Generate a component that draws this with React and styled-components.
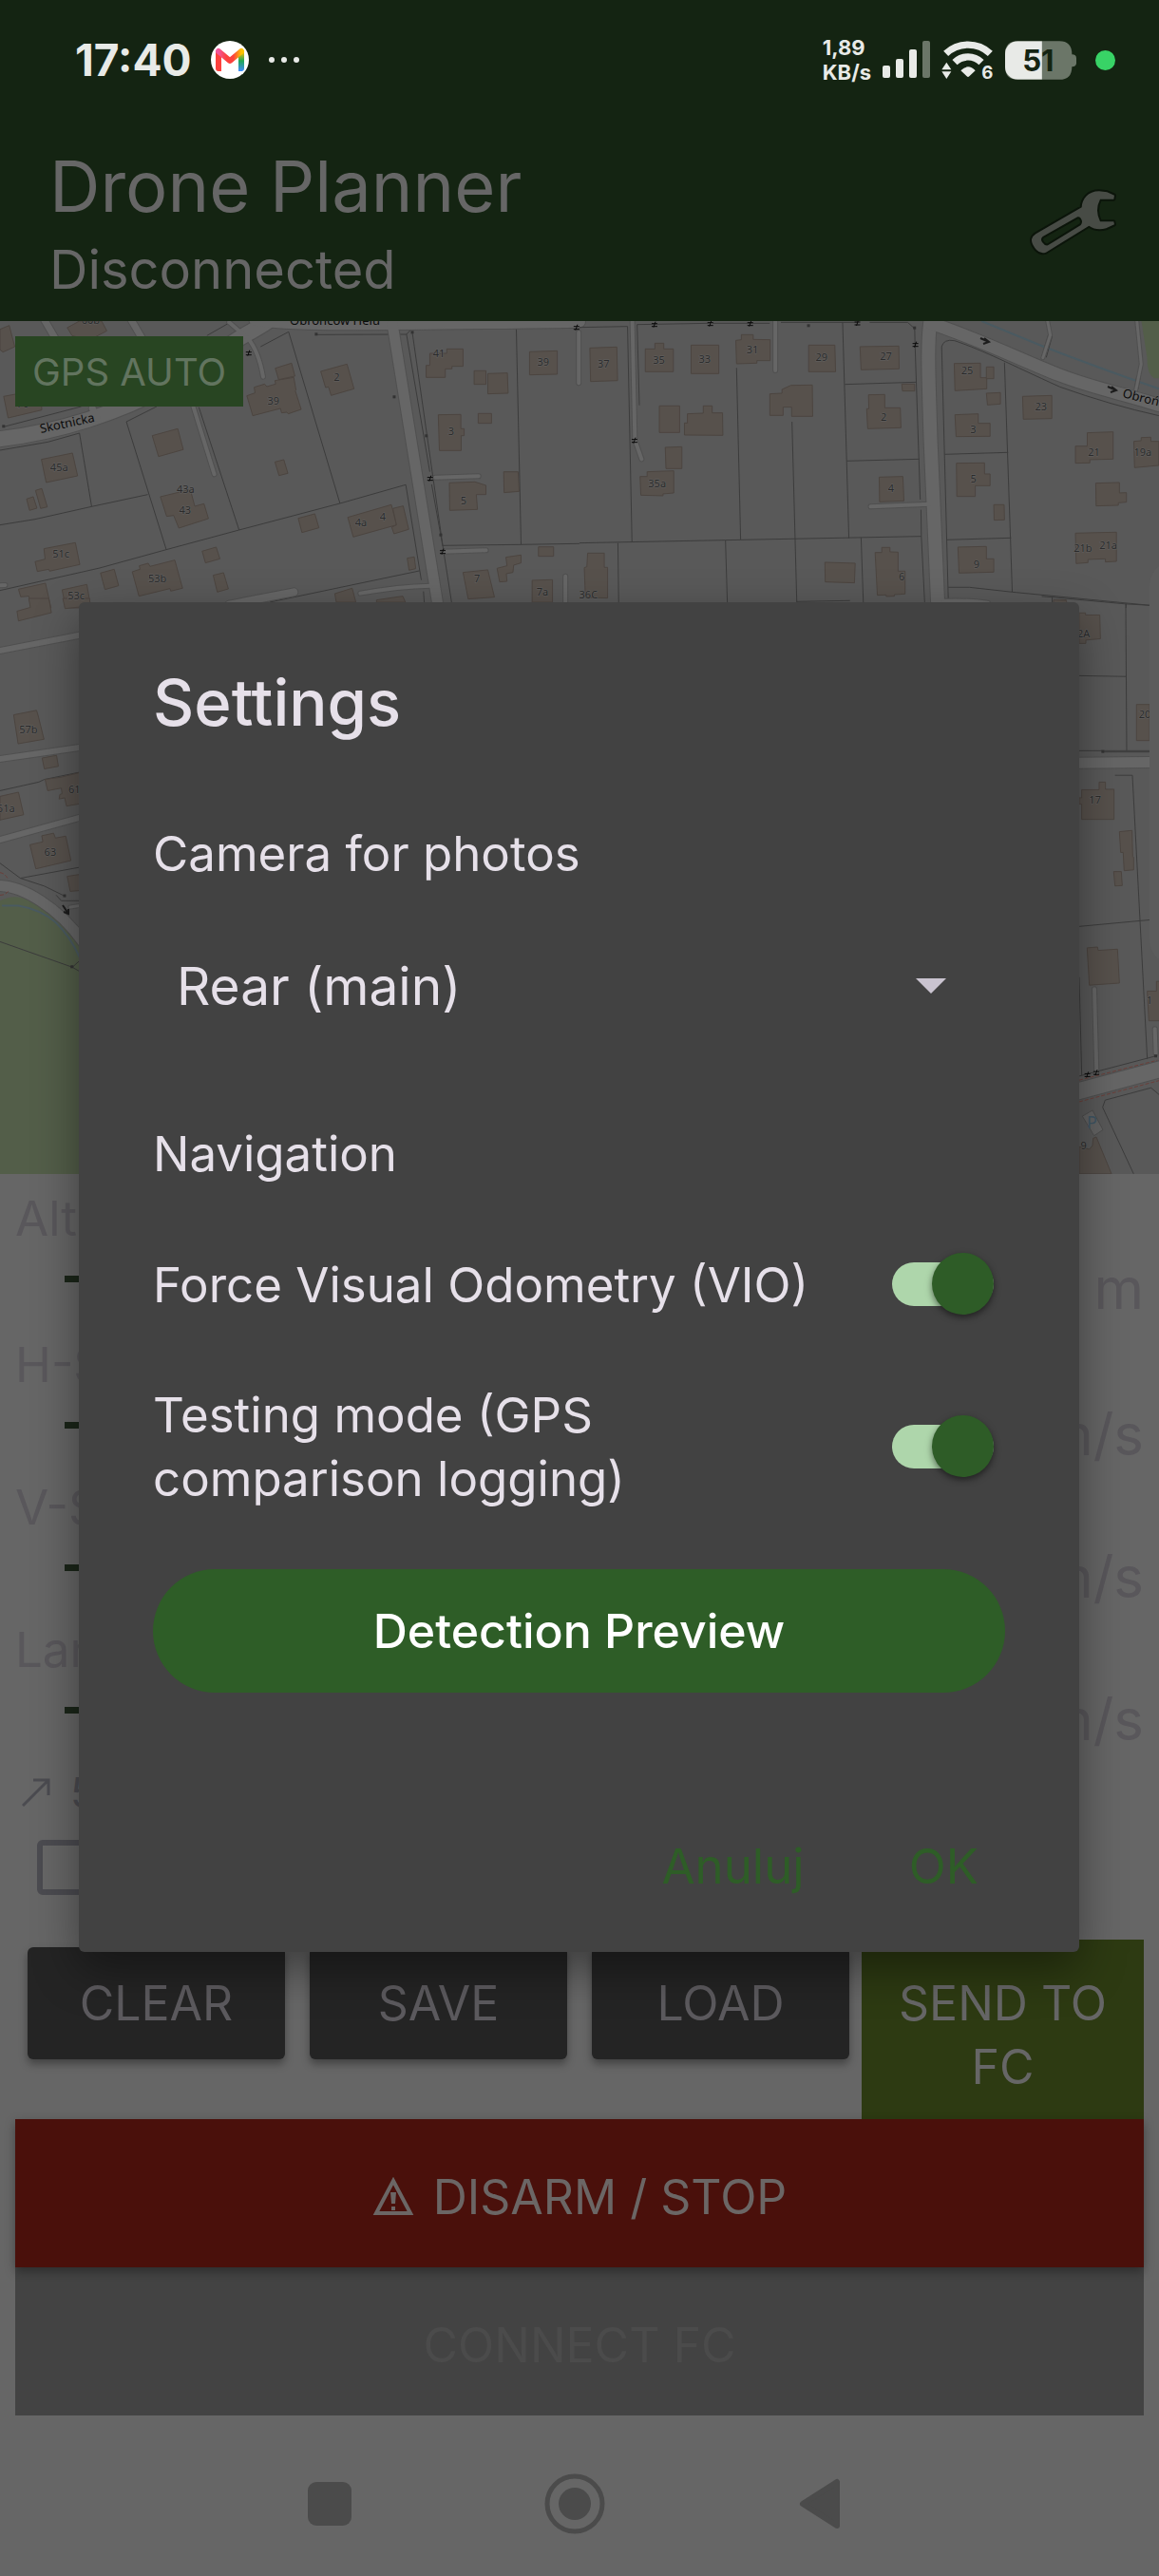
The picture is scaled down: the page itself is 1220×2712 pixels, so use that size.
import React, { useState } from 'react';
import styled, { createGlobalStyle } from 'styled-components';

const GlobalStyle = createGlobalStyle`
  * {
    box-sizing: border-box;
  }
  body {
    margin: 0;
    background: #666666;
    font-family: Inter, "Liberation Sans", sans-serif;
  }
  button,
  select,
  input {
    margin: 0;
    padding: 0;
    border: 0;
    font-family: inherit;
  }
`;

/* ---------- map ---------- */

// every sheet keeps its own grid, placed on the map by x, y and scale
const sheets = [
  {
    x: 0, y: -8, sx: 0.389, sy: 0.3333,
    roads: [
      { w: 16, d: 'M-10 398 C160 375 330 310 450 230 S600 110 660 70 S720 30 740 10' },
      { w: 12, d: 'M690 20 C760 36 900 38 1568 26' },
      { w: 11, d: 'M1062 34 L1186 930' },
      { w: 7, d: 'M120 20 L155 90 M355 20 L400 110 M250 300 L262 330' },
      { w: 4, d: 'M522 290 L580 508 M620 28 L672 80 Q700 120 712 200 M1178 518 L1295 514 M1200 752 L1315 748 M975 884 Q1080 862 1165 860 M1530 830 V930 M1566 60 V220 M-10 860 L14 858' },
      { w: 8, d: 'M620 920 L795 880' },
    ],
    lines: [
      'M0 432 L130 406 L215 378 L248 610 M0 668 L95 650 L248 610 L400 572 M0 875 L270 804 L450 746 L647 684 L920 600 L1098 541 L1140 842',
      'M424 294 L342 342 L450 746 M538 296 L647 684 M705 105 L781 58 L920 600 M857 67 L1100 66 L1163 500 M1100 66 L1116 46 H1550 M1116 62 L1198 733 L1222 912 M1198 733 L1410 730 L1568 727 M1397 44 L1410 730',
      'M10 358 L220 294 M730 912 L1135 813 M560 70 L620 30 M1146 878 L1148 912 M1168 540 L1198 735',
    ],
    houses: [
      'M112 461L196 441L210 513L125 534Z', 'M412 386L481 364L496 430L429 452Z', 'M434 579L515 556L527 609L552 601L564 648L484 678L470 638L451 641Z',
      'M668 260L690 251L688 233L716 223L722 231L746 223L744 212L795 202L801 242L799 244L815 303L780 317L776 312L762 314L759 300L684 323Z',
      'M745 173L789 157L798 198L754 209Z', 'M868 183L939 160L958 238L896 259L889 232L881 234Z', 'M744 469L768 462L779 505L755 512Z',
      'M1163 126H1209V112H1253V167H1223V175H1205V202H1153V164H1163Z', 'M1283 181H1315V224H1283Z', 'M1320 190L1373 188L1375 252L1320 254Z', 'M1433 121L1508 118V192L1433 194Z',
      'M1186 320L1247 319V364H1256V386H1248V433H1189Z', 'M1294 316H1330V347H1294Z', 'M1216 535L1285 532L1315 543V572H1289L1292 619L1217 622Z', 'M1363 500H1402L1405 562L1364 566Z',
      'M807 647L852 633L863 677L817 692Z', 'M941 644L1059 604L1073 668L956 706Z', 'M1063 616L1091 608L1106 682L1066 696L1060 675L1073 668Z', 'M1102 773L1121 769L1125 806L1107 811Z',
      'M119 743L204 724L216 793L134 814L132 808L101 815L95 784L122 776Z', 'M72 586L90 579L100 615L80 622Z', 'M96 559L113 553L128 611L110 616Z', 'M272 820L309 808L321 860L284 872Z',
      'M358 816L379 808L377 797L401 789L406 799L473 779L494 868L462 877L460 869L376 893Z', 'M547 751L585 738L595 775L556 788Z', 'M577 827L605 819L618 870L588 880Z',
      'M50 871L123 852L138 930H84L78 893L56 895Z', 'M168 873L235 856L246 930H178Z', 'M182 45L215 24H275L289 55L240 85L195 70Z', 'M0 50L25 38L40 105L8 122L0 115Z', 'M10 262L110 240L113 305L22 330Z',
      'M1253 818L1320 810L1338 896L1267 902Z', 'M1345 805L1372 797L1369 770L1410 763V788L1390 795L1388 818L1370 822L1372 846L1352 848Z', 'M1440 843L1495 841V912H1440Z', 'M1457 737H1498V767H1457Z',
      'M906 885L953 868L963 912H910Z', 'M1019 905L1090 893L1097 912H1019Z',
    ],
    labels: [[160, 497, '45a'], [502, 568, '43a'], [501, 632, '43'], [740, 288, '39'], [911, 214, '2'], [1188, 139, '41'], [1470, 165, '39'], [1221, 384, '3'], [1254, 604, '5'], [977, 673, '4a'], [1036, 655, '4'], [165, 772, '51c'], [426, 850, '53b'], [206, 903, '53c'], [1291, 850, '7'], [1468, 890, '7a'], [245, 32, '60b'], [62, 298, '70']],
    gates: [[673, 125], [1164, 521], [1198, 752], [1560, 44]],
    posts: [[857, 67], [1117, 61], [1068, 265], [1155, 388], [1194, 701], [11, 358]],
  },
  {
    x: 610, y: -8, sx: 0.389, sy: 0.3333,
    green: ['M1520 20 H1580 V205 H1555 Q1535 190 1536 140 Z'],
    water: ['M1088 24 L1250 102 Q1400 170 1568 238'],
    roads: [
      { w: 14, d: 'M950 20 C940 100 945 200 950 400 L970 930' },
      { w: 13, d: 'M950 30 C1100 90 1200 150 1300 195 S1480 255 1568 290' },
      { w: 4, d: 'M143 24 L150 400 L168 460 M530 24 V180 M788 610 L950 602 M985 908 Q1050 905 1105 914' },
      { w: 3, d: 'M1266 20 L1274 68 L1254 140 M1508 20 L1520 160 L1506 240' },
    ],
    lines: [
      'M0 44 L130 41 L142 721 M162 290 L156 35 L350 31 M360 31 H515 M545 28 L712 28 L729 710 M712 28 H752 M785 28 H888 L907 48 L908 100 L922 588 M425 172 L436 714 M575 342 L588 912',
      'M0 725 L395 716 L925 704 M718 224 L912 217 M723 466 L920 460 M104 725 L106 912 M395 716 L400 912 M762 708 L768 912 M924 620 L925 704 L934 912',
      'M998 905 L980 105 Q985 80 1015 86 C1100 120 1160 158 1300 232 Q1440 290 1568 323 M1150 155 L1171 880 M988 445 L1160 439 M994 715 L1168 709 M998 865 H1055 L1171 880 L1543 922 M1279 895 V912 M1479 916 V930 M588 910 L732 907',
      'M1268 70 L1251 136 M1279 72 L1263 139 M1508 200 L1502 238 M1517 202 L1511 240',
    ],
    houses: [
      'M28 109L101 106L103 212L30 215Z', 'M178 112H204V94H228V112H254V184H178Z', 'M302 100H377V190H302Z', 'M423 85L438 83V67H470V82L516 83V149H480V157L425 159Z', 'M620 100H691L693 184H620Z', 'M759 105L864 103L865 175L762 178Z',
      'M216 292H271V376H216Z', 'M292 317L335 315V292H359V314H387L388 385L284 384V346H292Z', 'M232 423L277 421V490H234Z', 'M183 500L255 497V567L226 570V576L166 574L164 515H183Z',
      'M515 254L548 252V240L572 227L630 226L631 325H574V296H551V322H515Z', 'M872 223H907V245H874Z', 'M782 257L826 256V298H868L870 361L780 364L777 301H783Z', 'M811 517L875 515L878 592L812 595Z',
      'M1014 158L1085 157V203H1102V238L1016 244Z', 'M1101 169H1121V206H1101Z', 'M1101 252L1139 250V286L1104 289Z', 'M1016 320L1079 317V347H1111V388L1019 389Z', 'M1020 473L1096 472V507H1111V544H1071V578H1021Z', 'M1121 604H1149L1150 652L1122 653Z',
      'M1199 262L1278 259V332L1201 334Z', 'M1374 377L1444 374V460L1381 462V472L1342 473V419H1374Z', 'M1500 404L1520 402V392L1546 391V404H1568V480L1502 487Z', 'M1397 536L1461 534V567L1480 566V596L1458 598V606L1398 608Z',
      'M1342 694L1453 691V783L1423 785V775L1376 777V787L1344 790Z', 'M1024 738L1101 736V775H1121V817L1027 820Z', 'M800 755H818V739H840V753L862 754V814H881V886L852 888V893L830 894V889L806 890Z', 'M664 786L746 789L744 851L665 848Z',
      'M22 757H67V802H76V899L16 897L13 803L20 800Z', 'M1284 905H1317V914H1284Z',
    ],
    labels: [[65, 170, '37'], [215, 158, '35'], [339, 156, '33'], [468, 127, '31'], [655, 151, '29'], [829, 148, '27'], [210, 550, '35a'], [823, 340, '2'], [843, 564, '4'], [1049, 191, '25'], [1065, 378, '3'], [1066, 535, '5'], [1249, 306, '23'], [1392, 450, '21'], [1524, 451, '19a'], [1362, 752, '21b'], [1431, 745, '21a'], [1074, 805, '9'], [872, 844, '6'], [24, 899, '36C']],
    gates: [[203, 35], [354, 32], [462, 32], [752, 30], [909, 98], [149, 401]],
    posts: [[621, 40], [908, 47]],
  },
  {
    x: 0, y: 292, sx: 0.389, sy: 0.3954,
    green: ['M0 805 Q50 782 90 812 Q160 840 215 915 V1533 H-10 V805 Z'],
    water: ['M5 818 H50 Q110 828 150 862 Q190 900 215 955'],
    roads: [
      { w: 6, d: 'M-5 140 L215 98 M-5 428 L215 397 M-5 644 L215 584' },
      { w: 11, d: 'M-10 765 C60 762 160 825 225 915' },
      { w: 3, d: 'M190 822 L215 818' },
    ],
    lines: ['M0 512 L105 489 L120 482 L215 463 M0 705 L55 745 L120 766 L176 793 M55 745 L215 716 M152 790 L166 805 H215 M0 914 L196 982 L215 965 M196 982 L215 993'],
    dashes: ['M0 730 Q14 732 22 748 M0 790 Q14 790 22 780'],
    houses: ['M46 34L82 24L78 0H132L139 38L50 60Z', 'M170 0H243V20L176 27Z', 'M37 310L99 298L103 311L119 375L49 387Z', 'M114 425L153 418L158 447L120 454Z', 'M122 482L165 476L215 464V547L180 553L175 531L160 534L162 522L168 520L166 505L129 512Z', 'M0 527L50 516L64 576L0 590Z', 'M81 656L116 648L113 632L145 625L150 638L178 633L192 698L97 720Z', 'M182 740L215 735V778L190 780Z'],
    labels: [[77, 358, '57b'], [201, 518, '61'], [16, 568, '61a'], [136, 686, '63']],
    posts: [[176, 793], [196, 982]],
  },
  {
    x: 1100, y: 222, sx: 0.3333, sy: 0.4464,
    roads: [
      { w: 11, d: 'M100 545 L330 543' },
      { w: 4, d: 'M156 1078 L163 1275 M347 1172 L350 1230' },
      { w: 17, d: 'M100 1320 L365 1267' },
    ],
    lines: ['M-10 152 L22 154 L255 170 L330 173 M255 170 L258 516 M100 339 L255 341 M100 516 H330 M184 519 H330 M221 574 H276 L323 1243 M100 931 L330 915 M108 1050 L116 1282 M100 1285 L350 1236', 'M280 1514 L182 1357 L190 1340 L335 1311 L365 1330'],
    dashes: ['M108 1293 L355 1246 M108 1344 L360 1294'],
    houses: ['M108 191H128V196H173L175 252L129 255V263H108Z', 'M289 407H330V492H289Z', 'M108 627H116V608H171V590H191V607H218V678H116V642H108Z', 'M235 707L275 704L277 765L280 768V797L250 799L247 756H239Z', 'M217 801H241L244 834L221 835Z', 'M133 981L166 979L168 987L229 984L235 1064L140 1069Z', 'M323 1083H352V1060H365V1153H328Z', 'M108 1450L140 1456L150 1447L152 1430L162 1427L210 1514H108Z', 'M27 160L68 162V167H27Z'],
    parking: 'M118 1378L150 1364L183 1410L155 1424Z',
    labels: [[122, 248, '2A'], [315, 440, '20'], [158, 640, '17'], [122, 1456, '9'], [330, 1113, '1']],
    gates: [[134, 1280], [162, 1275]],
    posts: [[184, 519], [351, 1237]],
  },
];

const MapSvg = styled.svg`
  display: block;
  width: 100%;
  height: auto;
  background: #595959;
  font-family: "Noto Sans", sans-serif;

  path {
    vector-effect: non-scaling-stroke;
  }
  .house { fill: #57514c; stroke: #4c4540; stroke-width: 1; }
  .casing { fill: none; stroke: #505050; stroke-linecap: round; stroke-linejoin: round; }
  .road { fill: none; stroke: #666666; stroke-linecap: round; stroke-linejoin: round; }
  .line { fill: none; stroke: #3c3c3c; stroke-width: 1; }
  .water { fill: none; stroke: #4a5a61; stroke-width: 2; }
  .green { fill: #535e49; }
  .dash { fill: none; stroke: #6a3f3a; stroke-width: 1; stroke-dasharray: 4 2; }
  .number { font-size: 11px; fill: #2b2b2b; text-anchor: middle; stroke: #626262; stroke-width: 1; paint-order: stroke; }
  .street { font-size: 13px; fill: #0b0b0b; stroke: #666666; stroke-width: 1; paint-order: stroke; }
`;

const MapView = () => (
  <MapSvg viewBox="0 0 1220 898" role="img" aria-label="Street map">
    {sheets.map((s, i) => (
      <g key={i} transform={`translate(${s.x} ${s.y}) scale(${s.sx} ${s.sy})`}>
        {s.green?.map((d) => <path key={d} className="green" d={d} />)}
        {s.water?.map((d) => <path key={d} className="water" d={d} />)}
        {s.lines.map((d) => <path key={d} className="line" d={d} />)}
        {s.roads.map((r) => <path key={r.d} className="casing" strokeWidth={r.w + 2} d={r.d} />)}
        {s.roads.map((r) => <path key={r.d} className="road" strokeWidth={r.w} d={r.d} />)}
        {s.dashes?.map((d) => <path key={d} className="dash" d={d} />)}
        {s.houses.map((d) => <path key={d} className="house" d={d} />)}
        {s.parking && <path d={s.parking} fill="#636363" stroke="#4d4d4d" />}
      </g>
    ))}
    {sheets.map((s, i) => (
      <g key={i}>
        {s.posts?.map(([x, y]) => (
          <rect key={`${x}-${y}`} x={s.x + x * s.sx - 2} y={s.y + y * s.sy - 2} width="3" height="3" fill="#333333" />
        ))}
        {s.gates?.map(([x, y]) => (
          <path
            key={`${x}-${y}`}
            transform={`translate(${s.x + x * s.sx} ${s.y + y * s.sy})`}
            d="M-3 -1H3M-3 2H3M-1 3L1 -3"
            stroke="#0a0a0a"
          />
        ))}
        {s.labels.map(([x, y, text]) => (
          <text key={`${x}-${y}`} className="number" x={s.x + x * s.sx} y={s.y + y * s.sy}>{text}</text>
        ))}
      </g>
    ))}
    <path d="M1032 18l9 4m-5 -4l5 4l-6 2M1166 69l9 4m-5 -4l5 4l-6 2M66 615l6 9m0 -5v5l-5 -2" fill="none" stroke="#1c1c1c" strokeWidth="2" />
    <text className="street" transform="translate(43 118) rotate(-12)">Skotnicka</text>
    <text className="street" x="305" y="4">Obrońców Helu</text>
    <text className="street" transform="translate(1181 80) rotate(14)">Obrońców Helu</text>
    <text x="1144" y="850" fontSize="18" fill="#3f5563">P</text>
    <rect x="1210" y="255" width="40" height="420" rx="24" fill="#5c5c5c" />
  </MapSvg>
);

/* ---------- top ---------- */

const Screen = styled.div`
  position: relative;
  display: flex;
  flex-direction: column;
  min-height: 100vh;
  overflow: hidden;
`;

const StatusBar = styled.div`
  display: flex;
  align-items: center;
  justify-content: space-between;
  height: 126px;
  padding: 0 46px 0 79px;
  background: #142412;
  color: #e8eae7;
`;

const StatusGroup = styled.div`
  display: flex;
  align-items: center;
  gap: ${(p) => p.$gap}px;
`;

const Clock = styled.span`
  font-size: 46px;
  font-weight: 700;
  line-height: 60px;
`;

const Speed = styled.span`
  font-size: 22px;
  font-weight: 700;
  line-height: 26px;
`;

const RecordingDot = styled.span`
  width: 21px;
  height: 21px;
  margin-left: 8px;
  border-radius: 50%;
  background: #38d366;
`;

const Header = styled.header`
  display: flex;
  align-items: flex-start;
  justify-content: space-between;
  padding: 24px 43px 12px 52px;
  background: #142412;
  color: #666666;
`;

const AppTitle = styled.h1`
  margin: 0;
  font-size: 74px;
  font-weight: 400;
  line-height: 92px;
`;

const AppState = styled.p`
  margin: 0;
  font-size: 56px;
  font-weight: 400;
  line-height: 84px;
`;

const ToolButton = styled.button`
  display: flex;
  padding-top: 48px;
  background: none;
`;

const GmailIcon = () => (
  <svg width="40" height="40" viewBox="0 0 40 40">
    <defs>
      <linearGradient id="gmRight" x1="0" y1="0" x2="0" y2="1">
        <stop offset="0" stopColor="#fbbc04" />
        <stop offset="0.45" stopColor="#1fa855" />
        <stop offset="1" stopColor="#3f8cff" />
      </linearGradient>
      <linearGradient id="gmTop" x1="0" y1="0" x2="1" y2="0">
        <stop offset="0" stopColor="#f2559b" />
        <stop offset="0.35" stopColor="#fc413d" />
        <stop offset="0.65" stopColor="#fc413d" />
        <stop offset="1" stopColor="#fcc400" />
      </linearGradient>
    </defs>
    <circle cx="20" cy="20" r="20" fill="#ffffff" />
    <path d="M5 12h6v20H8q-3 0-3-3z" fill="#fc413d" />
    <path d="M29 12h6v17q0 3-3 3h-3z" fill="url(#gmRight)" />
    <path d="M8 11L20 21L32 11" fill="none" stroke="url(#gmTop)" strokeWidth="6" strokeLinecap="round" strokeLinejoin="round" />
  </svg>
);

const DotsIcon = () => (
  <svg width="34" height="8" viewBox="0 0 34 8" fill="#e8eae7">
    <circle cx="4" cy="4" r="3" />
    <circle cx="17" cy="4" r="3" />
    <circle cx="30" cy="4" r="3" />
  </svg>
);

const SignalIcon = () => (
  <svg width="50" height="40" viewBox="0 0 50 40" fill="#e8eae7">
    <rect x="0" y="26" width="8" height="13" rx="2" />
    <rect x="14" y="19" width="8" height="20" rx="2" />
    <rect x="28" y="9" width="8" height="30" rx="2" />
    <rect x="42" y="0" width="8" height="39" rx="2" fill="#6b7668" />
  </svg>
);

const WifiIcon = () => (
  <svg width="55" height="42" viewBox="395 37 165 126" fill="#e8eae7">
    <path d="M409 80A102 102 0 0 1 549 80M437 108A60 60 0 0 1 521 108" fill="none" stroke="#e8eae7" strokeWidth="22" />
    <path d="M456 134Q479 110 502 134L483 152Q479 156 475 152Z" />
    <path d="M396 131L411 108L426 131ZM396 137H426L411 160Z" />
    <text x="522" y="160" fontSize="56" fontWeight="700">6</text>
  </svg>
);

const BatteryIcon = () => (
  <svg width="75" height="41" viewBox="600 36 226 122">
    <defs>
      <clipPath id="charge"><rect x="600" y="36" width="117" height="122" /></clipPath>
    </defs>
    <path d="M640 36H772Q812 36 812 78Q826 78 826 90V106Q826 117 812 117Q812 158 772 158H640Q600 158 600 118V76Q600 36 640 36Z" fill="#6b7668" />
    <rect x="600" y="36" width="212" height="122" rx="40" fill="#e8eae7" clipPath="url(#charge)" />
    <text x="705" y="132" fontSize="94" fontWeight="700" textAnchor="middle" fill="#142412">51</text>
  </svg>
);

const WrenchIcon = () => (
  <svg width="95" height="72" viewBox="665 505 285 216">
    <path
      d="M835 566C836 540 855 515 890 515L915 518L938 528L936 540H893Q875 575 893 611H936L938 620L912 632Q880 640 858 624L722 708Q705 714 692 700Q676 682 677 667Q680 656 690 650ZM822 596L712 658Q703 665 710 676Q718 688 728 686L832 622Q838 615 835 606Q830 594 822 596Z"
      fill="#474b45"
      fillRule="evenodd"
      stroke="#0b140a"
      strokeWidth="12"
      strokeLinejoin="round"
      paintOrder="stroke"
    />
  </svg>
);

const MapArea = styled.section`
  position: relative;
`;

const GpsBadge = styled.button`
  position: absolute;
  top: 16px;
  left: 16px;
  height: 74px;
  padding: 0 18px;
  background: #284522;
  color: #62745f;
  font-size: 40px;
`;

/* ---------- flight controls ---------- */

const Controls = styled.section`
  padding: 14px 16px 0;
`;

const Field = styled.div`
  margin-bottom: ${(p) => (p.$first ? 4 : 0)}px;
  color: #59575b;
`;

const FieldLabel = styled.label`
  display: block;
  font-size: 51px;
  line-height: 66px;
`;

const FieldRow = styled.div`
  display: flex;
  align-items: flex-start;
  gap: 40px;
  height: 84px;
  padding-left: 52px;
`;

const Range = styled.input`
  flex: 1;
  height: 60px;
  appearance: none;
  background: transparent;

  &::-webkit-slider-runnable-track {
    height: 7px;
    background: #1b2619;
  }
  &::-webkit-slider-thumb {
    appearance: none;
    width: 36px;
    height: 36px;
    margin-top: -15px;
    border-radius: 50%;
    background: #1b2619;
  }
`;

const Unit = styled.span`
  font-size: 60px;
  line-height: 80px;
`;

const Distance = styled.div`
  display: flex;
  align-items: center;
  gap: 21px;
  height: 66px;
  padding-left: 7px;
  color: #4b4b50;
  font-size: 44px;
`;

const FollowRow = styled.label`
  display: flex;
  align-items: center;
  gap: 24px;
  height: 92px;
  margin-bottom: 30px;
  padding-left: 23px;
  color: #59575b;
  font-size: 44px;
`;

const Tick = styled.input`
  width: 58px;
  height: 58px;
  appearance: none;
  border: 6px solid #4b4b50;
  border-radius: 6px;
`;

const Mission = styled.div`
  display: grid;
  grid-template-columns: repeat(4, 1fr);
  align-items: start;
`;

const MissionButton = styled.button`
  height: 118px;
  margin: 8px 13px;
  border-radius: 6px;
  background: #242424;
  box-shadow: 0 5px 8px rgba(0, 0, 0, 0.35);
  color: #5c5a5e;
  font-size: 50px;
`;

const SendButton = styled.button`
  height: 189px;
  padding-top: 12px;
  background: #2d3a12;
  color: #666666;
  font-size: 50px;
  line-height: 67px;
`;

const WideButton = styled.button`
  position: relative;
  display: flex;
  align-items: center;
  justify-content: center;
  gap: 20px;
  width: 100%;
  height: 156px;
  padding-top: 8px;
  background: ${(p) => (p.$danger ? '#4a100b' : '#434343')};
  color: ${(p) => (p.$danger ? '#6b6665' : '#4b4b4b')};
  box-shadow: ${(p) => (p.$danger ? '0 4px 10px rgba(0, 0, 0, 0.35)' : 'none')};
  z-index: ${(p) => (p.$danger ? 1 : 0)};
  font-size: 50px;
`;

const NavBar = styled.nav`
  display: flex;
  flex: 1;
  align-items: center;
  justify-content: center;
  gap: 194px;
  min-height: 169px;
  padding: 16px 10px 0 0;
`;

const NavButton = styled.button`
  display: flex;
  align-items: center;
  justify-content: center;
  width: 64px;
  height: 64px;
  background: none;
`;

/* ---------- dialog ---------- */

const Overlay = styled.div`
  position: absolute;
  inset: 0;
  z-index: 2;
  display: flex;
  align-items: center;
  justify-content: center;
  padding: 0 84px 23px 83px;
`;

const Dialog = styled.form`
  width: 100%;
  padding: 60px 78px 35px;
  border-radius: 6px;
  background: #424242;
  box-shadow: 0 18px 48px rgba(0, 0, 0, 0.4);
  color: #e6e0e9;
  font-size: 51px;
`;

const DialogTitle = styled.h2`
  margin: 0 0 80px;
  font-size: 67px;
  font-weight: 500;
  line-height: 92px;
`;

const DialogLabel = styled.label`
  display: block;
  line-height: 66px;
`;

const SelectWrap = styled.div`
  position: relative;
  display: flex;
  align-items: center;
  margin: 50px 0 88px;
`;

const Select = styled.select`
  width: 100%;
  height: 112px;
  padding: 0 120px 0 25px;
  appearance: none;
  background: transparent;
  color: #e6e0e9;
  font-size: 55px;
`;

const Caret = styled.svg`
  position: absolute;
  right: 62px;
  pointer-events: none;
`;

const SwitchRow = styled.label`
  display: flex;
  align-items: center;
  justify-content: space-between;
  gap: 60px;
  margin-top: 38px;
  padding-right: 12px;
  min-height: 132px;
  line-height: 67px;
`;

const Switch = styled.input`
  position: relative;
  flex: none;
  width: 107px;
  height: 46px;
  appearance: none;
  border-radius: 23px;
  background: ${(p) => (p.checked ? '#aed6ab' : '#8a8a8a')};

  &::after {
    content: "";
    position: absolute;
    top: -10px;
    ${(p) => (p.checked ? 'right' : 'left')}: 0;
    width: 65px;
    height: 65px;
    border-radius: 50%;
    background: #2e5c27;
    box-shadow: 0 3px 7px rgba(0, 0, 0, 0.5);
  }
`;

const PreviewButton = styled.button`
  width: 100%;
  height: 130px;
  margin: 62px 0 126px;
  border-radius: 65px;
  background: #2e5d27;
  color: #ffffff;
  font-size: 50px;
  font-weight: 500;
`;

const Actions = styled.div`
  display: flex;
  justify-content: flex-end;
  gap: 54px;
`;

const ActionButton = styled.button`
  height: 112px;
  padding: 0 28px;
  background: none;
  color: #2e5d27;
  font-size: 51px;
`;

const fields = [
  { id: 'altitude', label: 'Altitude', unit: 'm' },
  { id: 'hspeed', label: 'H-Speed', unit: 'm/s' },
  { id: 'vspeed', label: 'V-Speed', unit: 'm/s' },
  { id: 'landing', label: 'Landing', unit: 'm/s' },
];

const App = () => {
  const [vio, setVio] = useState(true);
  const [testing, setTesting] = useState(true);

  return (
    <Screen>
      <GlobalStyle />
      <StatusBar>
        <StatusGroup $gap={20}>
          <Clock>17:40</Clock>
          <GmailIcon />
          <DotsIcon />
        </StatusGroup>
        <StatusGroup $gap={12}>
          <Speed>1,89<br />KB/s</Speed>
          <SignalIcon />
          <WifiIcon />
          <BatteryIcon />
          <RecordingDot />
        </StatusGroup>
      </StatusBar>
      <Header>
        <div>
          <AppTitle>Drone Planner</AppTitle>
          <AppState>Disconnected</AppState>
        </div>
        <ToolButton type="button" aria-label="Settings">
          <WrenchIcon />
        </ToolButton>
      </Header>

      <MapArea>
        <MapView />
        <GpsBadge type="button">GPS AUTO</GpsBadge>
      </MapArea>

      <Controls>
        {fields.map((f, i) => (
          <Field key={f.id} $first={i === 0}>
            <FieldLabel htmlFor={f.id}>{f.label}</FieldLabel>
            <FieldRow>
              <Range id={f.id} type="range" defaultValue="40" />
              <Unit>{f.unit}</Unit>
            </FieldRow>
          </Field>
        ))}
        <Distance>
          <svg width="30" height="30" viewBox="0 0 30 30" fill="none" stroke="#4b4b50" strokeWidth="3">
            <path d="M1 29L27 3M12 2H28V18" />
          </svg>
          <span>5.0 m</span>
        </Distance>
        <FollowRow>
          <Tick type="checkbox" />
          Follow
        </FollowRow>
        <Mission>
          <MissionButton type="button">CLEAR</MissionButton>
          <MissionButton type="button">SAVE</MissionButton>
          <MissionButton type="button">LOAD</MissionButton>
          <SendButton type="button">SEND TO FC</SendButton>
        </Mission>
        <WideButton type="button" $danger>
          <svg width="44" height="42" viewBox="0 0 44 42">
            <path d="M22 4L40 38H4Z" fill="none" stroke="#6b6665" strokeWidth="4" />
            <path d="M19 16H25L24 28H20ZM20 31H24V35H20Z" fill="#6b6665" />
          </svg>
          DISARM / STOP
        </WideButton>
        <WideButton type="button" disabled>CONNECT FC</WideButton>
      </Controls>

      <NavBar>
        <NavButton type="button" aria-label="Recent apps">
          <svg width="48" height="48" viewBox="0 0 48 48">
            <rect x="1" y="1" width="46" height="46" rx="9" fill="#4b4b4b" />
          </svg>
        </NavButton>
        <NavButton type="button" aria-label="Home">
          <svg width="64" height="64" viewBox="0 0 64 64">
            <circle cx="32" cy="32" r="29" fill="none" stroke="#4b4b4b" strokeWidth="5" />
            <circle cx="32" cy="32" r="17" fill="#4b4b4b" />
          </svg>
        </NavButton>
        <NavButton type="button" aria-label="Back">
          <svg width="44" height="56" viewBox="0 0 44 56">
            <path d="M4 28L40 5V51Z" fill="#4b4b4b" stroke="#4b4b4b" strokeWidth="6" strokeLinejoin="round" />
          </svg>
        </NavButton>
      </NavBar>

      <Overlay>
        <Dialog role="dialog" aria-labelledby="settings-title" onSubmit={(e) => e.preventDefault()}>
          <DialogTitle id="settings-title">Settings</DialogTitle>
          <DialogLabel htmlFor="camera">Camera for photos</DialogLabel>
          <SelectWrap>
            <Select id="camera">
              <option>Rear (main)</option>
              <option>Front</option>
            </Select>
            <Caret width="32" height="16" viewBox="0 0 32 16">
              <path d="M0 0H32L16 16Z" fill="#cac4d0" />
            </Caret>
          </SelectWrap>
          <DialogLabel as="div">Navigation</DialogLabel>
          <SwitchRow>
            Force Visual Odometry (VIO)
            <Switch type="checkbox" role="switch" checked={vio} onChange={() => setVio(!vio)} />
          </SwitchRow>
          <SwitchRow>
            Testing mode (GPS comparison logging)
            <Switch type="checkbox" role="switch" checked={testing} onChange={() => setTesting(!testing)} />
          </SwitchRow>
          <PreviewButton type="button">Detection Preview</PreviewButton>
          <Actions>
            <ActionButton type="button">Anuluj</ActionButton>
            <ActionButton type="submit">OK</ActionButton>
          </Actions>
        </Dialog>
      </Overlay>
    </Screen>
  );
};

export default App;
